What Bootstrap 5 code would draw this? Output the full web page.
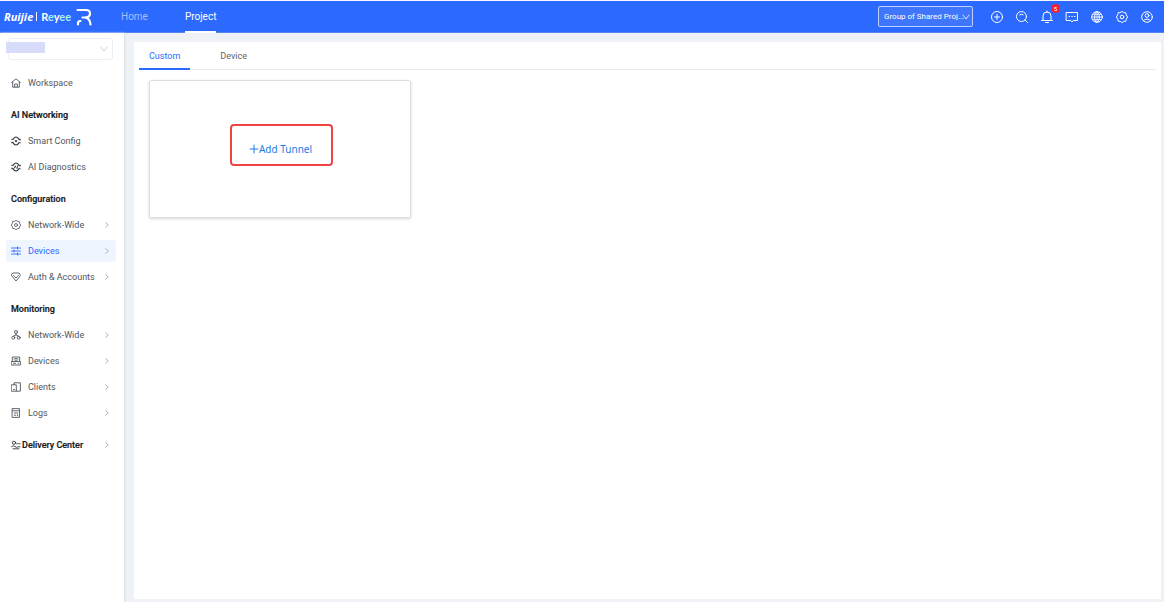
<!DOCTYPE html>
<html lang="en">
<head>
<meta charset="utf-8">
<meta name="viewport" content="width=device-width, initial-scale=1">
<title>Project – Tunnel</title>
<link href="https://cdn.jsdelivr.net/npm/bootstrap@5.3.0/dist/css/bootstrap.min.css" rel="stylesheet">
<style>
body{font-family:Roboto,"Liberation Sans",sans-serif;font-size:9px;line-height:14px;color:#50565e;background:#eef1f5;border-top:1px solid #f3f6ff}
svg{display:block;fill:none;stroke:currentColor;stroke-linecap:round;stroke-linejoin:round;flex:none}
.topbar{height:32px;background:#2b69ff;border-bottom:1px solid #5583f0;color:#fff}
.brand{width:121px;padding-left:4px;color:#fff;text-decoration:none;font-size:11px}
.brand-first{font-family:"Open Sans",sans-serif;font-style:italic;font-weight:700;font-size:11px}
.brand-bar{width:1px;height:9px;background:#fff;margin:0 4px 0 3px}
.brand-second{font-family:Lato,sans-serif;font-weight:700;font-size:11px}
.brand-second span{color:#a4efea}
.brand-mark{margin-left:5px}
.topbar .nav-link{padding:0;font-size:10px;line-height:31px;height:32px;color:#a3bfff;border-bottom:2px solid transparent}
.topbar .nav-link.active{color:#fff;border-color:#fff}
.main-nav{gap:37px}
.group-select{width:95px;height:21px;border:1px solid #bed0ff;border-radius:2px;background:#3f76fb;color:#fff}
.group-select select{width:100%;height:19px;appearance:none;border:0;background:none;color:#fff;font-size:8px;padding:0 8px 0 5px}
.group-select svg,.site-select svg{position:absolute;right:3px;top:7px;pointer-events:none}
.group-select svg{right:2px}
.tools{gap:11px;margin-left:17px;margin-right:10px}
.plain{border:0;background:none;padding:0;color:inherit}
.alerts{top:-6px;right:-6px;width:9px;height:9px;border-radius:5px;background:#f5222d;color:#fff;font-size:6px;line-height:9px}
.side{width:124px;background:#fff;box-shadow:1px 0 2px #d8dde2;padding:5px 8px 0 6px;flex:none}
.site-select{margin:0 3px 12px 2px;height:22px;border:1px solid #eceef0;border-radius:3px}
.site-select select{appearance:none;border:0;background:none;width:100%;height:20px}
.site-select svg{right:4px;color:#c6c9ce}
.redacted{left:-3px;top:3px;width:39px;height:11px;background:#d6dcfa}
.side a,.side h2{height:22px;margin:0 0 4px;padding:0 7px 0 5px;font-size:9px;line-height:22px;text-decoration:none;color:#50565e;border-radius:3px}
.side a{gap:7px}
.side .dark{color:#22262b}
.side h2,.side a.strong{color:#16191d;font-weight:500;-webkit-text-stroke:.2px #16191d}
.side h2,.side a.strong{margin-top:10px}
.side a.strong{gap:1px}
.side a.active{background:#eef5ff;color:#2b69ff}
.side .arrow{margin-left:auto;color:#9ca2a8}
.work{background:#fff;margin:9px 3px 3px 10px;padding:0 5px}
.work .nav{border-bottom:1px solid #e9ebee;gap:20px}
.work .nav-link{font-size:9px;line-height:14px;padding:7px 10px 5px;color:#5f6368;border-bottom:2px solid transparent;margin-bottom:-1px}
.work .nav-link.active{color:#2b69ff;border-color:#2b69ff}
.tunnel{width:262px;height:138px;margin:10px 10px 0;border:1px solid #dcdee1;border-radius:2px;box-shadow:0 1px 3px #d5d7da}
.add{width:103px;height:42px;margin:-8px 0 0 3px;padding:8px 2px 0 0;border:2px solid #f04444;border-radius:4px;color:#1a7be6;font-family:"Noto Sans","Open Sans",sans-serif;font-size:10px}
</style>
</head>
<body class="vh-100 d-flex flex-column overflow-hidden">
<svg class="d-none">
<symbol id="down" viewBox="0 0 8 6"><path d="M1 1l3 4 3-4"/></symbol>
<symbol id="right" viewBox="0 0 4 6"><path d="M.7.7L3.3 3 .7 5.3"/></symbol>
<symbol id="gear" viewBox="0 0 14 14"><path d="M5.300 2.600L7 1.300l1.700 1.300 2.100.2.500 2.100L12.600 7l-1.300 2.100-.5 2.100-2.100.2L7 12.700l-1.700-1.300-2.100-.2-.5-2.100L1.400 7l1.300-2.100.5-2.100z"/><circle cx="7" cy="7" r="1.800"/></symbol>
</svg>
<header class="topbar d-flex align-items-center flex-shrink-0">
<a class="brand d-flex align-items-center" href="#"><span class="brand-first">Ruijie</span><span class="brand-bar"></span><span class="brand-second">R<span>e</span>y<span>ee</span></span>
<svg class="brand-mark" width="17" height="18" viewBox="0 0 17 18" stroke-width="2.2"><path d="M1.500 2H10q4 0 4 3.500T10 9.500H6.500"/><path d="M2 16.500V15q0-2 2.500-2M9.500 9.500q4.500 1 5 7"/></svg></a>
<nav class="main-nav nav"><a class="nav-link" href="#">Home</a><a class="nav-link active" href="#">Project</a></nav>
<div class="group-select position-relative ms-auto"><select aria-label="Project group"><option>Group of Shared Proj...</option></select><svg width="8" height="6" stroke-width=".8"><use href="#down"/></svg></div>
<div class="tools d-flex align-items-center">
<button class="plain" aria-label="Add"><svg width="14" height="14" viewBox="0 0 14 14"><circle cx="7" cy="7" r="5.500"/><path d="M7 4.500v5M4.500 7h5"/></svg></button>
<button class="plain" aria-label="Search"><svg width="14" height="14" viewBox="0 0 14 14"><circle cx="6.500" cy="6.500" r="5"/><path d="M10 10l2.500 2.500M4.800 4.800q1.700-1.500 3.400 0"/></svg></button>
<button class="plain position-relative" aria-label="Notifications"><svg width="14" height="14" viewBox="0 0 14 14"><path d="M1.500 10.500h11M3 10.500V6a4 4 0 018 0v4.500M7 1v1M5.500 12.500h3"/></svg><span class="alerts position-absolute">5</span></button>
<button class="plain" aria-label="Messages"><svg width="14" height="14" viewBox="0 0 14 14"><path d="M1.500 2.500h11v8H8.200L7 12l-1.200-1.500H1.500zM4 6.500h.5M6.800 6.500h.5M9.500 6.500h.5"/></svg></button>
<button class="plain" aria-label="Language"><svg width="14" height="14" viewBox="0 0 14 14"><circle cx="7" cy="7" r="5.300"/><ellipse cx="7" cy="7" rx="2.300" ry="5.300"/><path d="M2 7h10M7 2v10M3 4.300h8M3 9.700h8" stroke-width=".8"/></svg></button>
<button class="plain" aria-label="Settings"><svg width="14" height="14"><use href="#gear"/></svg></button>
<button class="plain" aria-label="Account"><svg width="14" height="14" viewBox="0 0 14 14"><circle cx="7" cy="7" r="5.300"/><circle cx="7" cy="5.500" r="1.900"/><path d="M3.500 10.500q3.500-3 7 0"/></svg></button>
</div>
</header>
<div class="d-flex flex-grow-1">
<aside class="side">
<div class="site-select position-relative"><select aria-label="Site"><option></option></select><span class="redacted position-absolute"></span><svg width="8" height="6" stroke-width=".9"><use href="#down"/></svg></div>
<nav>
<a class="d-flex align-items-center" href="#"><svg width="10" height="10" viewBox="0 0 10 10" stroke-width=".9"><path d="M.6 4.500L5 .8l4.400 3.700M1.700 4v5.200h6.600V4M3.700 9V6h2.600v3"/></svg>Workspace</a>
<h2>AI Networking</h2>
<a class="d-flex align-items-center" href="#"><svg class="dark" width="10" height="10" viewBox="0 0 10 10" stroke-width="1.1"><path d="M.8 3.200h1.400Q3.200 1 5 1t2.800 2.200h1.400M.8 6.800h1.400Q3.200 9 5 9t2.800-2.200h1.400M1 6.800V6M9 3.200V4M5 4.200v1.600M4.200 5h1.600"/></svg>Smart Config</a>
<a class="d-flex align-items-center" href="#"><svg class="dark" width="10" height="10" viewBox="0 0 10 10" stroke-width="1.1"><path d="M.8 3.200h1.400Q3.200 1 5 1t2.800 2.200h1.400M.8 6.800h1.400Q3.200 9 5 9t2.800-2.200h1.400M1 6.800V6M9 3.200V4"/><path stroke-width=".8" d="M3.300 6.200l1-2.400 1 2.400M6.600 3.800v2.400"/></svg>AI Diagnostics</a>
<h2>Configuration</h2>
<a class="d-flex align-items-center" href="#"><svg width="10" height="10" viewBox="1 1 12 12"><use href="#gear" width="14" height="14"/></svg>Network-Wide<svg class="arrow" width="4" height="6" stroke-width=".8"><use href="#right"/></svg></a>
<a class="d-flex align-items-center active" href="#"><svg width="10" height="10" viewBox="0 0 10 10" stroke-width=".9"><path d="M.5 2h9M.5 5h9M.5 8h9M6.500 1v2M3 4v2M6.500 7v2"/></svg>Devices<svg class="arrow" width="4" height="6" stroke-width=".8"><use href="#right"/></svg></a>
<a class="d-flex align-items-center" href="#"><svg width="10" height="10" viewBox="0 0 10 10" stroke-width=".9"><path d="M2 1h6l1.500 2.500L5 9 .5 3.500zM2.600 3.500L5 6l2.400-2.500"/></svg>Auth &amp; Accounts<svg class="arrow" width="4" height="6" stroke-width=".8"><use href="#right"/></svg></a>
<h2>Monitoring</h2>
<a class="d-flex align-items-center" href="#"><svg width="10" height="10" viewBox="0 0 10 10" stroke-width=".9"><circle cx="5" cy="2" r="1.500"/><circle cx="2.300" cy="7.700" r="1.500"/><circle cx="7.700" cy="7.700" r="1.500"/><path d="M5 3.500V5M2.500 6.200L5 4.800l2.500 1.400"/></svg>Network-Wide<svg class="arrow" width="4" height="6" stroke-width=".8"><use href="#right"/></svg></a>
<a class="d-flex align-items-center" href="#"><svg width="10" height="10" viewBox="0 0 10 10" stroke-width=".9"><path d="M.6 5.500h8.800v3.500H.6zM1.300 5.500V1h7.400v4.500M3 3q2-1.500 4 0M4 4.300q1-.8 2 0M2.500 7.300h2M7 7.300h.5"/></svg>Devices<svg class="arrow" width="4" height="6" stroke-width=".8"><use href="#right"/></svg></a>
<a class="d-flex align-items-center" href="#"><svg width="10" height="10" viewBox="0 0 10 10" stroke-width=".9"><path d="M3 2.800V.8h6.400v8.400H5.500M.6 2.800h4.700v6.400H.6zM2.500 7.600h1"/></svg>Clients<svg class="arrow" width="4" height="6" stroke-width=".8"><use href="#right"/></svg></a>
<a class="d-flex align-items-center" href="#"><svg width="10" height="10" viewBox="0 0 10 10" stroke-width=".9"><path d="M1.500.6h7v8.800h-7zM1.500 2.800h7M3.300 5h3.500M3.300 7.200h1.500M6.500 6.800v1"/></svg>Logs<svg class="arrow" width="4" height="6" stroke-width=".8"><use href="#right"/></svg></a>
<a class="d-flex align-items-center strong" href="#"><svg width="10" height="10" viewBox="0 0 10 10" stroke-width=".8"><circle cx="3" cy="2.800" r="1.600"/><path d="M.6 6.500q1.700-1.500 3.400 0t3 .3h2M2 8.800h6M5.500 3.800q1.200-1 2 0h1.500"/></svg>Delivery Center<svg class="arrow" width="4" height="6" stroke-width=".8"><use href="#right"/></svg></a>
</nav>
</aside>
<main class="work flex-grow-1">
<nav class="nav"><a class="nav-link active" href="#">Custom</a><a class="nav-link" href="#">Device</a></nav>
<section class="tunnel d-flex align-items-center justify-content-center"><button class="add bg-transparent d-flex align-items-center justify-content-center"><svg width="10" height="10" viewBox="0 0 10 10"><path d="M5 1v8M1 5h8"/></svg>Add Tunnel</button></section>
</main>
</div>
<script src="https://cdn.jsdelivr.net/npm/bootstrap@5.3.0/dist/js/bootstrap.bundle.min.js"></script>
</body>
</html>
